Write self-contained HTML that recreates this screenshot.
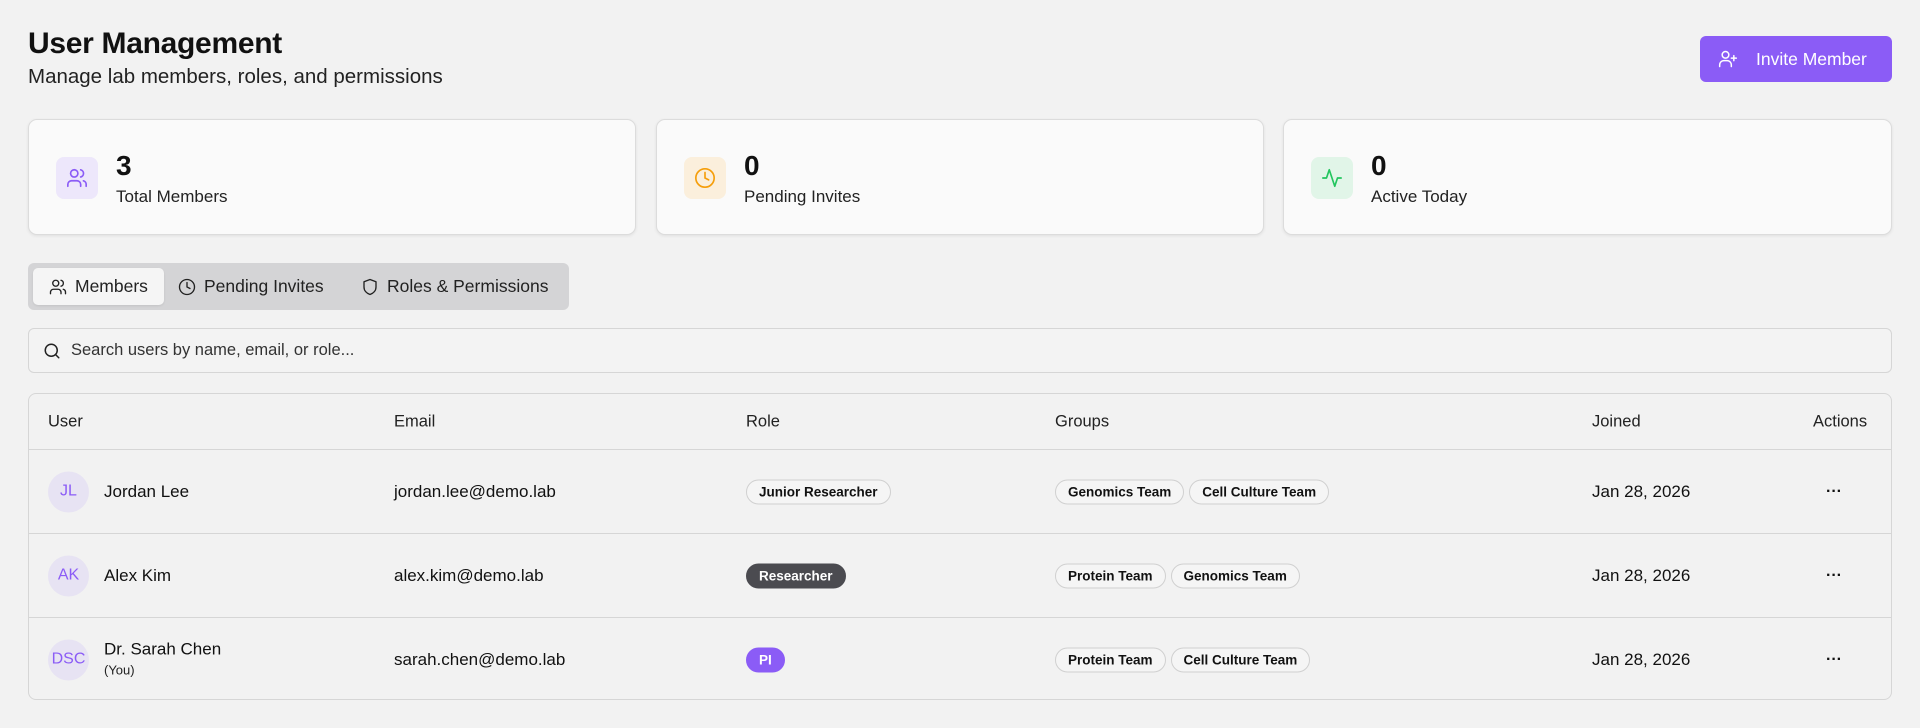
<!DOCTYPE html>
<html><head><meta charset="utf-8"><style>
*{box-sizing:border-box;margin:0;padding:0}
body{width:1920px;height:728px;background:#f2f2f2;font-family:"Liberation Sans",sans-serif;color:#111;position:relative;overflow:hidden}
.a{position:absolute}
h1{position:absolute;left:28px;top:27px;font-size:30px;font-weight:700;letter-spacing:-0.3px}
.sub{left:28px;top:65px;font-size:20.5px;color:#222}
.btn{left:1700px;top:36px;width:192px;height:46px;background:#8b5cf6;border-radius:6px;color:#fff;font-size:17.5px;display:flex;align-items:center;padding-left:18px;gap:18px}
.card{top:119px;height:116px;width:608px;background:#fafafa;border:1px solid #dcdcdc;border-radius:9px;box-shadow:0 1px 3px rgba(0,0,0,.08)}
.ib{position:absolute;left:27px;top:37px;width:42px;height:42px;border-radius:8px;display:flex;align-items:center;justify-content:center}
.num{position:absolute;left:87px;top:30px;font-size:28px;font-weight:700}
.lab{position:absolute;left:87px;top:67px;font-size:17px;color:#222}
.tabs{left:28px;top:263px;width:541px;height:47px;background:#d4d4d6;border-radius:6px}
.tab{position:absolute;top:5px;height:37px;display:flex;align-items:center;gap:8px;font-size:17.5px;color:#222}
.search{left:28px;top:328px;width:1864px;height:45px;border:1px solid #d6d6d6;border-radius:6px;background:#f3f3f3;display:flex;align-items:center;padding-left:14px;gap:10px;font-size:16.5px;color:#333}
.table{left:28px;top:393px;width:1864px;height:307px;border:1px solid #d6d6d6;border-radius:8px;background:#f2f2f2;overflow:hidden}
.row{position:absolute;left:0;width:100%;border-top:1px solid #d6d6d6}
.c{position:absolute;top:50%;transform:translateY(-50%);font-size:17px;white-space:nowrap}
.hd .c{font-size:16.5px;color:#222}
.av{position:absolute;left:19px;top:50%;transform:translateY(-50%);width:41px;height:41px;border-radius:50%;background:#e7e3f3;color:#8b5cf6;font-size:16px;display:flex;align-items:center;justify-content:center}
.bd{display:inline-block;height:25px;line-height:23px;padding:0 12px;border:1px solid #d0d0d0;border-radius:13px;font-size:13.5px;font-weight:700;background:#f5f5f5;margin-right:5px}
.dots{font-size:16px;font-weight:700;letter-spacing:0}
</style></head><body>
<h1>User Management</h1>
<div class="a sub">Manage lab members, roles, and permissions</div>
<div class="a btn"><svg width="20" height="20" viewBox="0 0 24 24" fill="none" stroke="#fff" stroke-width="1.8" stroke-linecap="round"><circle cx="9" cy="7" r="4"/><path d="M2 21v-2a5 5 0 0 1 5-5h4a5 5 0 0 1 5 5v2M19 8v6M16 11h6"/></svg>Invite Member</div>

<div class="a card" style="left:28px"><div class="ib" style="background:#ede7fb"><svg width="22" height="22" viewBox="0 0 24 24" fill="none" stroke="#8b5cf6" stroke-width="1.8" stroke-linecap="round"><circle cx="9" cy="7" r="4"/><path d="M2 21v-2a4 4 0 0 1 4-4h6a4 4 0 0 1 4 4v2M16 3.1a4 4 0 0 1 0 7.8M22 21v-2a4 4 0 0 0-3-3.9"/></svg></div><div class="num">3</div><div class="lab">Total Members</div></div>
<div class="a card" style="left:656px"><div class="ib" style="background:#fbefdc"><svg width="22" height="22" viewBox="0 0 24 24" fill="none" stroke="#f59e0b" stroke-width="1.8" stroke-linecap="round"><circle cx="12" cy="12" r="10"/><path d="M12 6v6l4 2"/></svg></div><div class="num">0</div><div class="lab">Pending Invites</div></div>
<div class="a card" style="left:1283px;width:609px"><div class="ib" style="background:#e1f5e8"><svg width="22" height="22" viewBox="0 0 24 24" fill="none" stroke="#22c55e" stroke-width="1.8" stroke-linecap="round" stroke-linejoin="round"><path d="M22 12h-4l-3 9L9 3l-3 9H2"/></svg></div><div class="num">0</div><div class="lab">Active Today</div></div>

<div class="a tabs">
<div class="tab" style="left:5px;width:131px;background:#f5f5f5;border-radius:5px;padding-left:16px;box-shadow:0 1px 2px rgba(0,0,0,.08)"><svg width="18" height="18" viewBox="0 0 24 24" fill="none" stroke="#222" stroke-width="1.8" stroke-linecap="round"><circle cx="9" cy="7" r="4"/><path d="M2 21v-2a4 4 0 0 1 4-4h6a4 4 0 0 1 4 4v2M16 3.1a4 4 0 0 1 0 7.8M22 21v-2a4 4 0 0 0-3-3.9"/></svg>Members</div>
<div class="tab" style="left:150px"><svg width="18" height="18" viewBox="0 0 24 24" fill="none" stroke="#222" stroke-width="1.8" stroke-linecap="round"><circle cx="12" cy="12" r="10"/><path d="M12 6v6l4 2"/></svg>Pending Invites</div>
<div class="tab" style="left:333px"><svg width="18" height="18" viewBox="0 0 24 24" fill="none" stroke="#222" stroke-width="1.8" stroke-linejoin="round"><path d="M12 2l8 3v7c0 5-3.5 8.5-8 10-4.5-1.5-8-5-8-10V5z"/></svg>Roles &amp; Permissions</div>
</div>

<div class="a search"><svg width="18" height="18" viewBox="0 0 24 24" fill="none" stroke="#222" stroke-width="2" stroke-linecap="round"><circle cx="11" cy="11" r="8"/><path d="M21 21l-4.3-4.3"/></svg>Search users by name, email, or role...</div>

<div class="a table">
<div class="row hd" style="top:0;height:55px;border-top:none">
<div class="c" style="left:19px">User</div><div class="c" style="left:365px">Email</div><div class="c" style="left:717px">Role</div><div class="c" style="left:1026px">Groups</div><div class="c" style="left:1563px">Joined</div><div class="c" style="left:1784px">Actions</div></div>

<div class="row" style="top:55px;height:84px">
<div class="av">JL</div><div class="c" style="left:75px">Jordan Lee</div><div class="c" style="left:365px">jordan.lee@demo.lab</div>
<div class="c" style="left:717px"><span class="bd">Junior Researcher</span></div>
<div class="c" style="left:1026px"><span class="bd">Genomics Team</span><span class="bd">Cell Culture Team</span></div>
<div class="c" style="left:1563px">Jan 28, 2026</div><div class="c dots" style="left:1797px">···</div></div>

<div class="row" style="top:139px;height:84px">
<div class="av">AK</div><div class="c" style="left:75px">Alex Kim</div><div class="c" style="left:365px">alex.kim@demo.lab</div>
<div class="c" style="left:717px"><span class="bd" style="background:#4b4b50;color:#fff;border-color:#4b4b50">Researcher</span></div>
<div class="c" style="left:1026px"><span class="bd">Protein Team</span><span class="bd">Genomics Team</span></div>
<div class="c" style="left:1563px">Jan 28, 2026</div><div class="c dots" style="left:1797px">···</div></div>

<div class="row" style="top:223px;height:84px">
<div class="av">DSC</div><div class="c" style="left:75px;line-height:20px">Dr. Sarah Chen<br><span style="font-size:13px;color:#222">(You)</span></div><div class="c" style="left:365px">sarah.chen@demo.lab</div>
<div class="c" style="left:717px"><span class="bd" style="background:#8b5cf6;color:#fff;border-color:#8b5cf6;padding:0 12px">PI</span></div>
<div class="c" style="left:1026px"><span class="bd">Protein Team</span><span class="bd">Cell Culture Team</span></div>
<div class="c" style="left:1563px">Jan 28, 2026</div><div class="c dots" style="left:1797px">···</div></div>
</div>
</body></html>
